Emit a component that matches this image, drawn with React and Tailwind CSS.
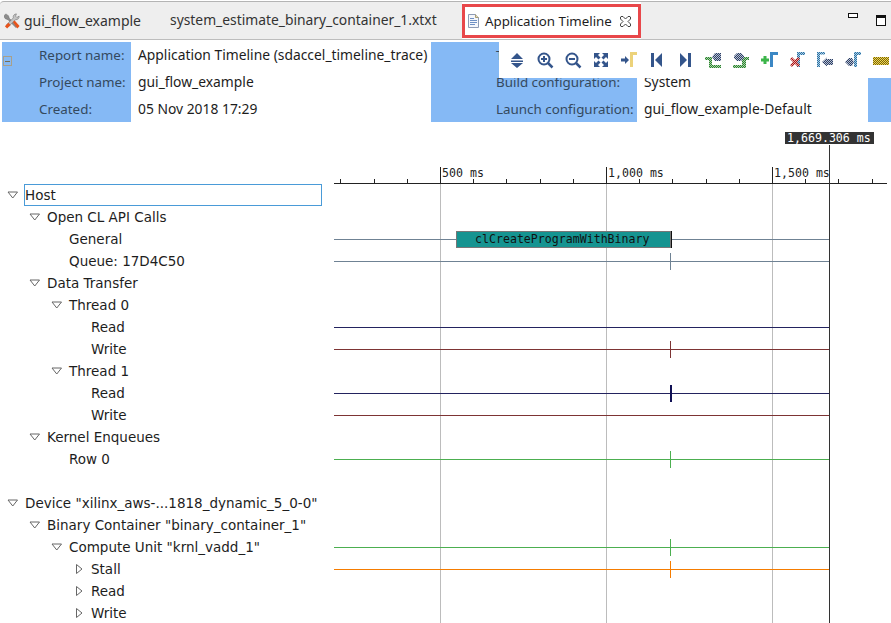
const sans = "font-['Noto_Sans',sans-serif]";

const treeRows = [
  { label: 'Host', depth: 0, arrow: 'down', focused: true },
  { label: 'Open CL API Calls', depth: 1, arrow: 'down' },
  { label: 'General', depth: 2 },
  { label: 'Queue: 17D4C50', depth: 2 },
  { label: 'Data Transfer', depth: 1, arrow: 'down' },
  { label: 'Thread 0', depth: 2, arrow: 'down' },
  { label: 'Read', depth: 3 },
  { label: 'Write', depth: 3 },
  { label: 'Thread 1', depth: 2, arrow: 'down' },
  { label: 'Read', depth: 3 },
  { label: 'Write', depth: 3 },
  { label: 'Kernel Enqueues', depth: 1, arrow: 'down' },
  { label: 'Row 0', depth: 2 },
  { label: '', depth: 0 },
  { label: 'Device "xilinx_aws-...1818_dynamic_5_0-0"', depth: 0, arrow: 'down' },
  { label: 'Binary Container "binary_container_1"', depth: 1, arrow: 'down' },
  { label: 'Compute Unit "krnl_vadd_1"', depth: 2, arrow: 'down' },
  { label: 'Stall', depth: 3, arrow: 'right' },
  { label: 'Read', depth: 3, arrow: 'right' },
  { label: 'Write', depth: 3, arrow: 'right' },
];

const depthPad = ['pl-[7px]', 'pl-[29px]', 'pl-[51px]', 'pl-[73px]'];

const traces = [
  { y: 239, color: '#6f8294' },
  { y: 261, color: '#6f8294', tick: true },
  { y: 327, color: '#23235f' },
  { y: 349, color: '#7d3434', tick: true },
  { y: 393, color: '#23235f', tick: true, thick: true },
  { y: 415, color: '#7d3434' },
  { y: 459, color: '#4caf50', tick: true },
  { y: 547, color: '#4caf50', tick: true },
  { y: 569, color: '#f57c00', tick: true },
];

function TreeArrow({ dir }) {
  return (
    <svg width="12" height="10" viewBox="0 0 12 10" className="shrink-0">
      {dir === 'down' ? (
        <path d="M1 2h9.500L5.750 8z" fill="#fff" stroke="#666" />
      ) : (
        <path d="M3.500 .5v9l5.500-4.500z" fill="#fff" stroke="#666" />
      )}
    </svg>
  );
}

function TreeRow({ label, depth, arrow, focused }) {
  return (
    <div className={`flex h-[22px] items-center ${depthPad[depth]}`}>
      <div className="w-[17px] shrink-0">{arrow && <TreeArrow dir={arrow} />}</div>
      <div
        className={`mr-[12px] flex h-[22px] flex-1 items-center whitespace-nowrap border pt-[1px] ${
          focused ? 'border-[#4a9bd8]' : 'border-transparent'
        }`}
      >
        {label}
      </div>
    </div>
  );
}

function TimelineChart() {
  const minor = [];
  for (let i = -3; i < 14; i++) {
    if (i % 5 !== 0) minor.push(440 + i * 33.2);
  }
  return (
    <svg width="557" height="501" viewBox="334 122 557 501" className="shrink-0" shapeRendering="crispEdges">
      {[440, 606, 772].map((x) => (
        <line key={x} x1={x + 0.5} x2={x + 0.5} y1="184" y2="623" stroke="#bcbcbc" />
      ))}
      {traces.map((t) => (
        <line key={t.y} x1="334" x2="829" y1={t.y + 0.5} y2={t.y + 0.5} stroke={t.color} />
      ))}
      {traces.filter((t) => t.tick).map((t) => (
        <rect key={t.y} x="670" y={t.y - 8} width={t.thick ? 2 : 1} height="17" fill={t.thick ? '#111155' : t.color} />
      ))}

      <line x1="334" x2="887" y1="183.5" y2="183.5" stroke="#222" />
      {minor.map((x) => (
        <line key={x} x1={Math.round(x) + 0.5} x2={Math.round(x) + 0.5} y1="179" y2="183" stroke="#222" />
      ))}
      {[440, 606, 772].map((x) => (
        <line key={x} x1={x + 0.5} x2={x + 0.5} y1="167" y2="183" stroke="#222" />
      ))}
      <g fontFamily="'DejaVu Sans Mono', monospace" fontSize="11.6" fill="#222" shapeRendering="auto">
        <text x="442" y="177">500 ms</text>
        <text x="608" y="177">1,000 ms</text>
        <text x="774" y="177">1,500 ms</text>
      </g>

      <rect x="456.5" y="231.5" width="214" height="16" fill="#159491" stroke="#777" />
      <rect x="671" y="231" width="1" height="17" fill="#111" />
      <text x="475" y="243" fontFamily="'DejaVu Sans Mono', monospace" fontSize="11.6" fill="#111">
        clCreateProgramWithBinary
      </text>

      <rect x="829" y="145" width="1" height="478" fill="#333" />
      <rect x="785" y="132" width="89" height="12" fill="#333" />
      <text x="787" y="142" fontFamily="'DejaVu Sans Mono', monospace" fontSize="11.6" fill="#fff">
        1,669.306 ms
      </text>
    </svg>
  );
}

function ToolsIcon() {
  return (
    <svg width="16" height="16" viewBox="0 0 18 18" className="shrink-0">
      <path d="M2 1l3 2 1 3 9 9-1.500 1.500-9-9-3-1-2-3z" fill="#8c8c8c" stroke="#666" strokeWidth=".5" />
      <path d="M14 1a3.500 3.500 0 0 0-3.500 4.500L3 13l2 2.500 8-8a3.500 3.500 0 0 0 4-4l-2.500 1.500-1.500-1.500z" fill="#c4c4c4" stroke="#666" strokeWidth=".6" />
      <path d="M1 15l4-4 2.500 2.500-4 4z" fill="#e8541c" />
      <path d="M10 10l2-1.500 5.500 6-2.500 3z" fill="#e8541c" />
    </svg>
  );
}

function DocIcon() {
  return (
    <svg width="11" height="14" viewBox="0 0 11 14" className="shrink-0">
      <path d="M.5 .5h7l3 3v10H.5z" fill="#f4f6fb" stroke="#8e9bb5" />
      <path d="M7.500 .5v3h3" fill="#e6dcb4" stroke="#a89c74" />
      <path d="M2 4.500h4M2 6.500h7M2 8.500h7M2 10.500h5" stroke="#6d8fc4" />
    </svg>
  );
}

function CloseIcon() {
  return (
    <svg width="11" height="11" viewBox="0 0 11 11" className="shrink-0">
      <path
        d="M1 .5h2L5.500 3 8 .5h2L10.500 1v2L8 5.500 10.500 8v2l-.5.5H8L5.500 8 3 10.500H1L.5 10V8L3 5.500.5 3V1z"
        fill="#fff"
        stroke="#444"
      />
    </svg>
  );
}

function Dither({ id, dark, light }) {
  return (
    <pattern id={id} width="2" height="2" patternUnits="userSpaceOnUse">
      <rect width="2" height="2" fill={light} />
      <rect width="1" height="1" fill={dark} />
      <rect x="1" y="1" width="1" height="1" fill={dark} />
    </pattern>
  );
}

const blue = '#34558b';

const toolIcons = [
  <path key="a" d="M9 2l6 6H3zM3 9.500h12v1.500H3zM3 12h12l-6 5z" fill={blue} />,
  <g key="b" fill="none" stroke={blue}>
    <circle cx="8" cy="8" r="5.500" strokeWidth="2" />
    <path d="M5 8h6M8 5v6" strokeWidth="2" />
    <path d="M12 12l4.500 4.500" strokeWidth="2.500" />
  </g>,
  <g key="c" fill="none" stroke={blue}>
    <circle cx="8" cy="8" r="5.500" strokeWidth="2" />
    <path d="M5 8h6" strokeWidth="2" />
    <path d="M12 12l4.500 4.500" strokeWidth="2.500" />
  </g>,
  <path key="d" d="M2 2h6L6 4l2.500 2.500-2 2L4 6 2 8zM16 2v6l-2-2-2.500 2.500-2-2L12 4l-2-2zM2 16v-6l2 2 2.500-2.500 2 2L6 14l2 2zM16 16h-6l2-2-2.500-2.500 2-2L14 12l2-2z" fill={blue} />,
  <g key="e">
    <path d="M1 7.500h4V5l4 4-4 4v-2.500H1z" fill={blue} />
    <path d="M10 16V1h7v3h-4v12z" fill="#ecd27a" />
  </g>,
  <g key="f" fill={blue}>
    <rect x="3" y="2" width="3" height="14" />
    <path d="M14 2v14L7 9z" />
  </g>,
  <g key="g" fill={blue}>
    <rect x="12" y="2" width="3" height="14" />
    <path d="M4 2v14l7-7z" />
  </g>,
  <g key="h">
    <path d="M1 6h7v3H8v5h9v3H5V9H1z" fill="url(#ditherGreen)" />
    <path d="M8 6l3-4h6v8h-6z" fill="url(#ditherBlue)" />
  </g>,
  <g key="i">
    <path d="M17 6v3h-3v8H1v-3h9V6z" fill="url(#ditherGreen)" />
    <path d="M2 5l3-3h4l3 3v2l-3 3H5L2 7z" fill="url(#ditherBlue)" />
  </g>,
  <g key="j">
    <path d="M1 7.500h2.500V5h3v2.500H9v3H6.500V13h-3v-2.500H1z" fill="#3cb54a" />
    <path d="M10 1h8v3h-5v12h-3z" fill="#3b87c4" />
  </g>,
  <g key="k">
    <path d="M9 1h8v3h-5v12H9z" fill="url(#ditherSteel)" />
    <path d="M2 8l2-2 3 3 3-3 2 2-3 3 3 3-2 2-3-3-3 3-2-2 3-3z" fill="url(#ditherRed)" />
  </g>,
  <g key="l">
    <path d="M1 1h8v2.500H4V16H1z" fill="url(#ditherSteel)" />
    <path d="M6 11l5-4.500V8h6v6h-6v1.500z" fill="url(#ditherBlue)" />
  </g>,
  <g key="m">
    <path d="M10 16V1h7v3h-4v12z" fill="url(#ditherSteel)" />
    <path d="M1 11l4-4h3l2 4-2 4H5z" fill="url(#ditherBlue)" />
  </g>,
  <rect key="n" x="1" y="6" width="16" height="8" fill="url(#ditherYellow)" />,
];

function TabBar() {
  return (
    <div className="mt-[1px] flex h-[39px] shrink-0 items-stretch rounded-tl-[4px] border-y border-t-[#b4b4b4] border-b-[#bdbdbd] bg-[#eeeeee] text-[14px] text-[#333]">
      <div className="flex w-[170px] items-center gap-[4px] pl-[4px]">
        <ToolsIcon />
        <span>gui_flow_example</span>
      </div>
      <span className="flex w-[292px] items-center whitespace-nowrap text-[13.85px]">
        system_estimate_binary_container_1.xtxt
      </span>
      <div className="w-[179px] bg-white pt-[2px]">
        <div className="flex h-[34px] items-center whitespace-nowrap border-[3px] border-[#e8474a] pl-[3px] text-[13.3px] text-[#1d1d1d]">
          <DocIcon />
          <span className="ml-[6px] pt-[1px]">Application Timeline</span>
          <span className="ml-[8px]"><CloseIcon /></span>
        </div>
      </div>
      <div className="ml-auto flex items-center gap-[18px] pr-[5px]">
        <div className="mb-[10px] h-[5px] w-[10px] border border-[#111] bg-white" />
        <div className="h-[11px] w-[10px] border border-t-[3px] border-[#111] bg-white" />
      </div>
    </div>
  );
}

function HeaderColumn({ labels, className }) {
  return (
    <div className={`flex flex-col overflow-hidden bg-[#85b9f5] text-[13.4px] text-[#34495e] ${className}`}>
      {labels.map((label) => (
        <div key={label} className="flex h-[27px] shrink-0 items-center whitespace-nowrap">{label}</div>
      ))}
    </div>
  );
}

function ValueColumn({ values, className }) {
  return (
    <div className={`flex flex-col overflow-hidden text-[13.85px] text-[#1d1d1d] ${className}`}>
      {values.map((value) => (
        <div key={value} className="flex h-[27px] shrink-0 items-center whitespace-nowrap">{value}</div>
      ))}
    </div>
  );
}

function ReportHeader() {
  return (
    <div className="relative flex h-[82px] shrink-0 pt-[2px] pl-[2px] text-[14px]">
      <div className="absolute left-[3px] top-[16px] flex h-[10px] w-[9px] items-center justify-center border border-[#a8a08a]">
        <div className="h-px w-[5px] bg-[#776f55]" />
      </div>
      <HeaderColumn className="w-[129px] pl-[37px]" labels={['Report name:', 'Project name:', 'Created:']} />
      <ValueColumn
        className="w-[300px] pl-[7px]"
        values={['Application Timeline (sdaccel_timeline_trace)', 'gui_flow_example', '05 Nov 2018 17:29']}
      />
      <HeaderColumn className="w-[206px] pl-[65px]" labels={['Target platform:', 'Build configuration:', 'Launch configuration:']} />
      <ValueColumn
        className="w-[231px] pl-[7px]"
        values={['xilinx_aws-vu9p', 'System', 'gui_flow_example-Default']}
      />
      <div className="flex-1 bg-[#85b9f5]" />
      <div className="absolute left-[499px] right-0 top-0 flex h-[38px] items-center overflow-hidden bg-white pl-[4px] pt-[2px]">
        <svg width="0" height="0" className="absolute">
          <defs>
            <Dither id="ditherGreen" dark="#2e7d32" light="#a8d8a8" />
            <Dither id="ditherBlue" dark="#2c3f66" light="#b8c0d0" />
            <Dither id="ditherSteel" dark="#2f6f9f" light="#a8cfe8" />
            <Dither id="ditherRed" dark="#a01818" light="#f0a0a0" />
            <Dither id="ditherYellow" dark="#7a6410" light="#f0d850" />
          </defs>
        </svg>
        {toolIcons.map((icon, i) => (
          <div key={i} className="flex w-[28px] shrink-0 justify-center">
            <svg width="18" height="18" viewBox="0 0 18 18">{icon}</svg>
          </div>
        ))}
      </div>
    </div>
  );
}

export default function App() {
  return (
    <div className={`flex h-[623px] w-[891px] flex-col overflow-hidden bg-white ${sans}`}>
      <TabBar />
      <ReportHeader />
      <div className="flex flex-1 overflow-hidden">
        <div className="w-[334px] shrink-0 pt-[62px] font-['DejaVu_Sans',sans-serif] text-[13.5px] text-[#1d1d1d]">
          {treeRows.map((row, i) => (
            <TreeRow key={i} {...row} />
          ))}
        </div>
        <TimelineChart />
      </div>
    </div>
  );
}
